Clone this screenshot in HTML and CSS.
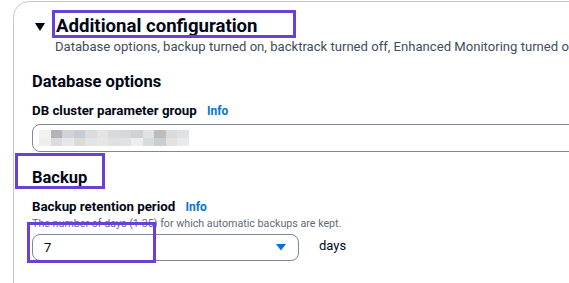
FILE: index.html
```html
<!DOCTYPE html>
<html>
<head>
    <title>Additional configuration</title>
    <link rel="stylesheet" href="styles.css">
</head>
<body>
    <div class="card">
        <div class="expand-header">
            <span class="caret"></span>
            <h2 class="expand-title">Additional configuration</h2>
        </div>
        <p class="expand-desc">Database options, backup turned on, backtrack turned off, Enhanced Monitoring turned on</p>

        <div class="section">
            <h3 class="section-title">Database options</h3>
            <div class="field-label">DB cluster parameter group <a class="info">Info</a></div>
            <div class="input-box">
                <div class="blur">
                    <span style="background:#f3f2f0"></span><span style="background:#b4b4b6"></span><span style="background:#d2d3d5"></span><span style="background:#c6ccd4"></span><span style="background:#dcdcdc"></span><span style="background:#e4e4e4"></span><span style="background:#dadadc"></span><span style="background:#d6d8dc"></span><span style="background:#cfd1d4"></span><span style="background:#e2e2e4"></span><span style="background:#bdbbbb"></span><span style="background:#dadbdc"></span><span style="background:#e0e1e2"></span>
                    <span style="background:#eeeeec"></span><span style="background:#dadbdd"></span><span style="background:#e6e7e9"></span><span style="background:#dcdad7"></span><span style="background:#e2e3e5"></span><span style="background:#e6e6e8"></span><span style="background:#dfe0e2"></span><span style="background:#e2e2e2"></span><span style="background:#eeeeee"></span><span style="background:#d9dcdf"></span><span style="background:#c8ced2"></span><span style="background:#e4e2df"></span><span style="background:#e9eaec"></span>
                </div>
            </div>
        </div>

        <div class="section backup">
            <h3 class="section-title">Backup</h3>
            <div class="field-label">Backup retention period <a class="info">Info</a></div>
            <div class="field-desc">The number of days (1-35) for which automatic backups are kept.</div>
            <div class="select-row">
                <div class="select-box">
                    <span>7</span>
                    <svg width="10" height="7" viewBox="0 0 10 7"><path d="M0 0h10L5 6.5z" fill="#0972d3"/></svg>
                </div>
                <span class="unit">days</span>
            </div>
        </div>

        <div class="mark mark-title"></div>
        <div class="mark mark-backup"></div>
        <div class="mark mark-select"></div>
    </div>
</body>
</html>
```

FILE: styles.css
```css
body {
    margin: 0;
    background: #ffffff;
    font-family: 'Roboto', 'Open Sans', sans-serif;
    color: #000716;
    overflow: hidden;
    width: 569px;
    height: 283px;
}

.card {
    position: relative;
    margin: 1px 0 0 13px;
    width: 640px;
    height: 300px;
    border: 1px solid #c6c6cd;
    border-radius: 16px;
    white-space: nowrap;
}

.expand-header {
    display: flex;
    align-items: center;
    padding: 12px 0 0 21px;
}

.caret {
    width: 0;
    height: 0;
    border-left: 5px solid transparent;
    border-right: 5px solid transparent;
    border-top: 8px solid #000716;
    margin-right: 11px;
    margin-top: 1px;
}

.expand-title {
    margin: 0;
    font-size: 18.6px;
    line-height: 24px;
    font-weight: 700;
}

.expand-desc {
    margin: 1px 0 0 41px;
    font-size: 13.1px;
    line-height: 16px;
    color: #414d5c;
}

.section {
    padding-left: 18px;
}

.section-title {
    margin: 16px 0 0;
    font-size: 16.5px;
    line-height: 22px;
    font-weight: 700;
}

.field-label {
    margin-top: 9px;
    font-size: 13.3px;
    line-height: 18px;
    font-weight: 700;
}

.info {
    margin-left: 7px;
    font-size: 12px;
    color: #0972d3;
}

.input-box {
    margin-top: 4px;
    height: 26px;
    border: 1px solid #7d8998;
    border-radius: 8px;
    display: flex;
    align-items: center;
    padding-left: 6px;
}

.blur {
    display: grid;
    grid-template-columns: repeat(13, 11.5px);
    grid-auto-rows: 8px;
}

.blur span {
    display: block;
}

.backup .section-title {
    margin-top: 15px;
}

.backup .field-label {
    margin-top: 9px;
}

.field-desc {
    margin-top: 1px;
    font-size: 10.7px;
    line-height: 14px;
    color: #5f6b7a;
}

.select-row {
    display: flex;
    align-items: center;
    margin-top: 3px;
}

.select-box {
    width: 242px;
    height: 25px;
    border: 1px solid #7d8998;
    border-radius: 8px;
    display: flex;
    align-items: center;
    justify-content: space-between;
    padding: 0 12px 0 11px;
    font-size: 13px;
}

.unit {
    margin-left: 20px;
    margin-top: -4px;
    font-size: 13px;
}

.mark {
    position: absolute;
    border: 3px solid #6a40d6;
}

.mark-title {
    left: 38px;
    top: 8px;
    width: 238px;
    height: 22px;
}

.mark-backup {
    left: 1px;
    top: 151px;
    width: 84px;
    height: 30px;
}

.mark-select {
    left: 13px;
    top: 220px;
    width: 123px;
    height: 35px;
}
```
